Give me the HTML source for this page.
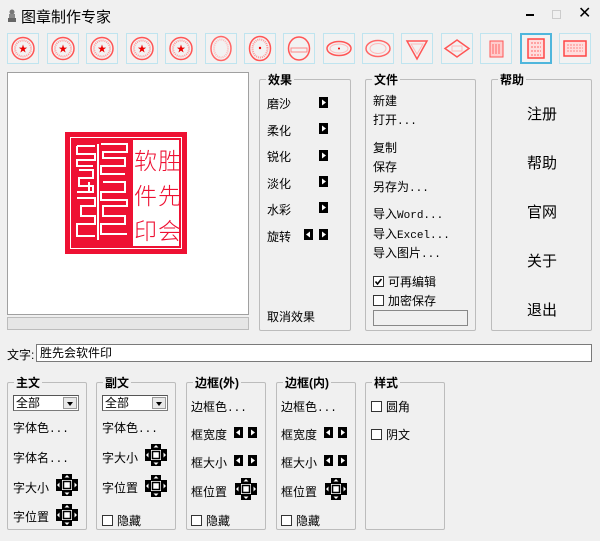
<!DOCTYPE html>
<html><head><meta charset="utf-8"><style>
*{margin:0;padding:0;box-sizing:border-box}
body{width:600px;height:541px;background:#f0f0f0;position:relative;overflow:hidden;font-family:"Liberation Sans","Noto Sans CJK SC",sans-serif;font-size:12px;color:#000}
.a{position:absolute;white-space:nowrap}
.g{position:absolute;border:1px solid #bcbcbc;border-radius:2px}
.gt{position:absolute;top:-9px;left:6px;background:#f0f0f0;padding:0 2px;font-weight:bold;font-size:12px}
.cb{display:inline-block;width:11px;height:11px;border:1px solid #333;background:#fff;vertical-align:-1px;margin-right:4px;position:relative}
.tb{position:absolute;top:33px;width:32px;height:31px;border:1px solid #bfe4ef;background:#f2f2f2}
.ar{position:absolute}
.dd{position:absolute;width:66px;height:16px;border:1px solid #7a7a7a;border-top-color:#555;border-left-color:#555;background:#fff;font-size:12px;line-height:14px;padding-left:2px}
.dd b{position:absolute;right:1px;top:1px;width:14px;height:12px;background:#e8e8e8;border:1px solid #999}
.dd b:after{content:"";position:absolute;left:3px;top:4px;border:3px solid transparent;border-top:4px solid #000}
.ed{font-family:"Liberation Mono","Noto Sans CJK SC",monospace;font-size:11px}
</style></head><body>
<svg class="a" style="left:7px;top:9px" width="10" height="14"><circle cx="5" cy="3" r="2.5" fill="#777"/><rect x="2" y="5" width="6" height="4" fill="#888"/><rect x="1" y="9" width="8" height="4" fill="#666"/></svg>
<div class="a" style="left:21px;top:6px;font-size:15px">图章制作专家</div>
<div class="a" style="left:526px;top:14px;width:8px;height:2px;background:#000"></div>
<div class="a" style="left:552px;top:10px;width:9px;height:9px;border:1px solid #ccc"></div>
<div class="a" style="left:578px;top:3px;font-size:16px">✕</div>

<div class="tb" style="left:7px"><svg width="30" height="29"><circle cx="15" cy="14.5" r="11" fill="none" stroke="#f55" stroke-width="1.5"/><circle cx="15" cy="14.5" r="8" fill="none" stroke="#f99" stroke-width="2" stroke-dasharray="1 1"/><text x="15" y="18" font-size="9" fill="#e00" text-anchor="middle">★</text></svg></div>
<div class="tb" style="left:47px"><svg width="30" height="29"><circle cx="15" cy="14.5" r="11" fill="none" stroke="#f55" stroke-width="1.5"/><circle cx="15" cy="14.5" r="8" fill="none" stroke="#f99" stroke-width="2" stroke-dasharray="1 1"/><text x="15" y="18" font-size="9" fill="#e00" text-anchor="middle">★</text></svg></div>
<div class="tb" style="left:86px"><svg width="30" height="29"><circle cx="15" cy="14.5" r="11" fill="none" stroke="#f55" stroke-width="1.5"/><circle cx="15" cy="14.5" r="8" fill="none" stroke="#f99" stroke-width="2" stroke-dasharray="1 1"/><text x="15" y="18" font-size="9" fill="#e00" text-anchor="middle">★</text></svg></div>
<div class="tb" style="left:126px"><svg width="30" height="29"><circle cx="15" cy="14.5" r="11" fill="none" stroke="#f55" stroke-width="1.5"/><circle cx="15" cy="14.5" r="8" fill="none" stroke="#f99" stroke-width="2" stroke-dasharray="1 1"/><text x="15" y="18" font-size="9" fill="#e00" text-anchor="middle">★</text></svg></div>
<div class="tb" style="left:165px"><svg width="30" height="29"><circle cx="15" cy="14.5" r="11" fill="none" stroke="#f55" stroke-width="1.5"/><circle cx="15" cy="14.5" r="8" fill="none" stroke="#f99" stroke-width="2" stroke-dasharray="1 1"/><text x="15" y="18" font-size="9" fill="#e00" text-anchor="middle">★</text></svg></div>
<div class="tb" style="left:205px"><svg width="30" height="29"><ellipse cx="15" cy="14.5" rx="10" ry="12" fill="none" stroke="#f66" stroke-width="1.5"/><ellipse cx="15" cy="14.5" rx="7" ry="9" fill="none" stroke="#fbb" stroke-width="2" stroke-dasharray="1 1"/></svg></div>
<div class="tb" style="left:244px"><svg width="30" height="29"><ellipse cx="15" cy="14.5" rx="10.5" ry="12" fill="none" stroke="#f55" stroke-width="1.5"/><ellipse cx="15" cy="14.5" rx="7.5" ry="9" fill="none" stroke="#f99" stroke-width="2" stroke-dasharray="1 1"/><circle cx="15" cy="14" r="1.2" fill="#e00"/></svg></div>
<div class="tb" style="left:283px"><svg width="30" height="29"><ellipse cx="15" cy="14.5" rx="10.5" ry="11.5" fill="none" stroke="#f55" stroke-width="1.5"/><rect x="7" y="14" width="16" height="4" fill="none" stroke="#f88"/></svg></div>
<div class="tb" style="left:323px"><svg width="30" height="29"><ellipse cx="15" cy="14.5" rx="12" ry="7" fill="none" stroke="#f55" stroke-width="1.5"/><ellipse cx="15" cy="14.5" rx="9" ry="4.5" fill="none" stroke="#fbb"/><circle cx="15" cy="14.5" r="1" fill="#e00"/></svg></div>
<div class="tb" style="left:362px"><svg width="30" height="29"><ellipse cx="15" cy="14.5" rx="12" ry="8" fill="none" stroke="#f66" stroke-width="1.5"/><ellipse cx="15" cy="14.5" rx="8" ry="5" fill="none" stroke="#fbb"/></svg></div>
<div class="tb" style="left:401px"><svg width="30" height="29"><path d="M5 7 H25 L15 25 Z" fill="none" stroke="#f55" stroke-width="1.5"/><path d="M9 10 H21 L15 20 Z" fill="none" stroke="#fbb"/></svg></div>
<div class="tb" style="left:441px"><svg width="30" height="29"><path d="M15 6 L27 14.5 L15 23 L3 14.5 Z" fill="none" stroke="#f55" stroke-width="1.5"/><rect x="10" y="12" width="10" height="5" fill="none" stroke="#fbb"/></svg></div>
<div class="tb" style="left:480px"><svg width="30" height="29"><rect x="9" y="7" width="13" height="16" fill="#fcc" stroke="#f55"/><path d="M12 10v10M15 10v10M18 10v10" stroke="#f66"/></svg></div>
<div class="tb" style="left:520px;border:2px solid #4fb6dc"><svg width="28" height="27"><rect x="6" y="4" width="16" height="19" fill="#fdd" stroke="#f44" stroke-width="1.5"/><path d="M9 8h10M9 12h10M9 16h10M9 20h10" stroke="#f66" stroke-dasharray="2 1"/></svg></div>
<div class="tb" style="left:559px"><svg width="30" height="29"><rect x="4" y="7" width="22" height="15" fill="#fdd" stroke="#f44" stroke-width="1.5"/><path d="M7 11h16M7 14h16M7 17h16" stroke="#f88" stroke-dasharray="2 1"/></svg></div>

<div class="a" style="left:7px;top:72px;width:242px;height:243px;background:#fff;border:1px solid #a0a0a0"></div>
<svg class="a" style="left:65px;top:132px" width="122" height="122">
<rect width="122" height="122" fill="#ee1133"/>
<rect x="5.5" y="5.5" width="111" height="111" fill="none" stroke="#fff" stroke-width="1"/>
<rect x="68" y="8" width="46" height="106" fill="#fff"/>
<g stroke="#fff" stroke-width="2" fill="none">
<path d="M12 14h18M12 14v8h18v6H12v6h16"/><path d="M14 38h14v8H14v8h14v6H12"/><path d="M12 66h18v8H16v10h14v8H12v12h18"/>
<path d="M36 12h26v8H38v6h22v8H36v8h24"/><path d="M38 50h22v10H36v8h26v6H38v10h22v8H36v10h26"/>
<path d="M33 12v96M24 50v10"/>
</g>
<g font-size="23" fill="#ee1133" font-family="Noto Sans CJK SC" font-weight="300">
<text x="69" y="37">软</text><text x="93" y="37">胜</text>
<text x="69" y="72">件</text><text x="93" y="72">先</text>
<text x="69" y="107">印</text><text x="93" y="107">会</text>
</g>
</svg>
<div class="a" style="left:7px;top:317px;width:242px;height:13px;border:1px solid #bcbcbc;background:#e6e6e6"></div>

<div class="g" style="left:259px;top:79px;width:92px;height:252px"><div class="gt">效果</div></div>
<div class="a" style="left:267px;top:95px">磨沙</div>
<div class="a" style="left:267px;top:122px">柔化</div>
<div class="a" style="left:267px;top:148px">锐化</div>
<div class="a" style="left:267px;top:175px">淡化</div>
<div class="a" style="left:267px;top:201px">水彩</div>
<div class="a" style="left:267px;top:228px">旋转</div>
<div class="a" style="left:267px;top:308px">取消效果</div>
<svg class="ar" style="left:319px;top:97px" width="9" height="145">
<g fill="#000"><rect y="0" width="9" height="11"/><rect y="26" width="9" height="11"/><rect y="53" width="9" height="11"/><rect y="79" width="9" height="11"/><rect y="105" width="9" height="11"/><rect y="132" width="9" height="11"/></g>
<g fill="#fff"><path d="M3 2.5l4 3-4 3z"/><path d="M3 28.5l4 3-4 3z"/><path d="M3 55.5l4 3-4 3z"/><path d="M3 81.5l4 3-4 3z"/><path d="M3 107.5l4 3-4 3z"/><path d="M3 134.5l4 3-4 3z"/></g>
</svg>
<svg class="ar" style="left:304px;top:229px" width="9" height="11"><rect width="9" height="11"/><path d="M6 2.5l-4 3 4 3z" fill="#fff"/></svg>

<div class="g" style="left:365px;top:79px;width:111px;height:252px"><div class="gt">文件</div></div>
<div class="a" style="left:373px;top:92px">新建</div>
<div class="a" style="left:373px;top:111px">打开<span class="ed">...</span></div>
<div class="a" style="left:373px;top:139px">复制</div>
<div class="a" style="left:373px;top:158px">保存</div>
<div class="a" style="left:373px;top:178px">另存为<span class="ed">...</span></div>
<div class="a" style="left:373px;top:205px">导入<span class="ed">Word...</span></div>
<div class="a" style="left:373px;top:225px">导入<span class="ed">Excel...</span></div>
<div class="a" style="left:373px;top:244px">导入图片<span class="ed">...</span></div>
<div class="a" style="left:373px;top:273px"><span class="cb"><svg width="9" height="9" style="position:absolute;left:0;top:0"><path d="M1.5 4.5l2 2.5 4-5" stroke="#000" stroke-width="1.6" fill="none"/></svg></span>可再编辑</div>
<div class="a" style="left:373px;top:292px"><span class="cb"></span>加密保存</div>
<div class="a" style="left:373px;top:310px;width:95px;height:16px;border:1px solid #888;background:#f0f0f0"></div>

<div class="g" style="left:491px;top:79px;width:101px;height:252px"><div class="gt">帮助</div></div>
<div class="a" style="left:527px;top:103px;font-size:15px">注册</div>
<div class="a" style="left:527px;top:152px;font-size:15px">帮助</div>
<div class="a" style="left:527px;top:201px;font-size:15px">官网</div>
<div class="a" style="left:527px;top:250px;font-size:15px">关于</div>
<div class="a" style="left:527px;top:299px;font-size:15px">退出</div>

<div class="a" style="left:7px;top:346px">文字:</div>
<div class="a" style="left:36px;top:344px;width:556px;height:18px;border:1px solid #7a7a7a;background:#fff;padding-left:3px;line-height:16px">胜先会软件印</div>

<div class="g" style="left:7px;top:382px;width:80px;height:148px"><div class="gt">主文</div></div>
<div class="dd" style="left:13px;top:395px">全部<b></b></div>
<div class="a" style="left:13px;top:419px">字体色<span class="ed">...</span></div>
<div class="a" style="left:13px;top:449px">字体名<span class="ed">...</span></div>
<div class="a" style="left:13px;top:479px">字大小</div>
<div class="a" style="left:13px;top:508px">字位置</div>

<div class="g" style="left:96px;top:382px;width:80px;height:148px"><div class="gt">副文</div></div>
<div class="dd" style="left:102px;top:395px">全部<b></b></div>
<div class="a" style="left:102px;top:419px">字体色<span class="ed">...</span></div>
<div class="a" style="left:102px;top:449px">字大小</div>
<div class="a" style="left:102px;top:479px">字位置</div>
<div class="a" style="left:102px;top:512px"><span class="cb"></span>隐藏</div>

<div class="g" style="left:186px;top:382px;width:80px;height:148px"><div class="gt">边框(外)</div></div>
<div class="a" style="left:191px;top:398px">边框色<span class="ed">...</span></div>
<div class="a" style="left:191px;top:426px">框宽度</div>
<div class="a" style="left:191px;top:454px">框大小</div>
<div class="a" style="left:191px;top:483px">框位置</div>
<div class="a" style="left:191px;top:512px"><span class="cb"></span>隐藏</div>

<div class="g" style="left:276px;top:382px;width:80px;height:148px"><div class="gt">边框(内)</div></div>
<div class="a" style="left:281px;top:398px">边框色<span class="ed">...</span></div>
<div class="a" style="left:281px;top:426px">框宽度</div>
<div class="a" style="left:281px;top:454px">框大小</div>
<div class="a" style="left:281px;top:483px">框位置</div>
<div class="a" style="left:281px;top:512px"><span class="cb"></span>隐藏</div>

<div class="g" style="left:365px;top:382px;width:80px;height:148px"><div class="gt">样式</div></div>
<div class="a" style="left:371px;top:398px"><span class="cb"></span>圆角</div>
<div class="a" style="left:371px;top:426px"><span class="cb"></span>阴文</div>

<svg class="a" style="left:234px;top:427px" width="23" height="40"><g><rect width="9" height="11"/><rect x="14" width="9" height="11"/><rect y="28" width="9" height="11"/><rect x="14" y="28" width="9" height="11"/></g><g fill="#fff"><path d="M6 2.5l-4 3 4 3z"/><path d="M17 2.5l4 3-4 3z"/><path d="M6 30.5l-4 3 4 3z"/><path d="M17 30.5l4 3-4 3z"/></g></svg>
<svg class="a" style="left:324px;top:427px" width="23" height="40"><g><rect width="9" height="11"/><rect x="14" width="9" height="11"/><rect y="28" width="9" height="11"/><rect x="14" y="28" width="9" height="11"/></g><g fill="#fff"><path d="M6 2.5l-4 3 4 3z"/><path d="M17 2.5l4 3-4 3z"/><path d="M6 30.5l-4 3 4 3z"/><path d="M17 30.5l4 3-4 3z"/></g></svg>

<svg width="0" height="0" style="position:absolute"><defs><g id="pad"><path d="M6 0h10v5h6v12h-6v5H6v-5H0V5h6z" fill="#000"/><rect x="6" y="6" width="10" height="10" fill="#fff"/><path d="M8.5 3.5l2.5-2.5 2.5 2.5z M8.5 18.5l2.5 2.5 2.5-2.5z M3.5 8.5l-2.5 2.5 2.5 2.5z M18.5 8.5l2.5 2.5-2.5 2.5z" fill="#fff"/><rect x="7.5" y="7.5" width="7" height="7" fill="none" stroke="#000" stroke-width="1.5"/></g></defs></svg>
<svg class="a" style="left:56px;top:474px" width="22" height="22"><use href="#pad"/></svg>
<svg class="a" style="left:56px;top:504px" width="22" height="22"><use href="#pad"/></svg>
<svg class="a" style="left:145px;top:444px" width="22" height="22"><use href="#pad"/></svg>
<svg class="a" style="left:145px;top:475px" width="22" height="22"><use href="#pad"/></svg>
<svg class="a" style="left:235px;top:478px" width="22" height="22"><use href="#pad"/></svg>
<svg class="a" style="left:325px;top:478px" width="22" height="22"><use href="#pad"/></svg>
</body></html>
